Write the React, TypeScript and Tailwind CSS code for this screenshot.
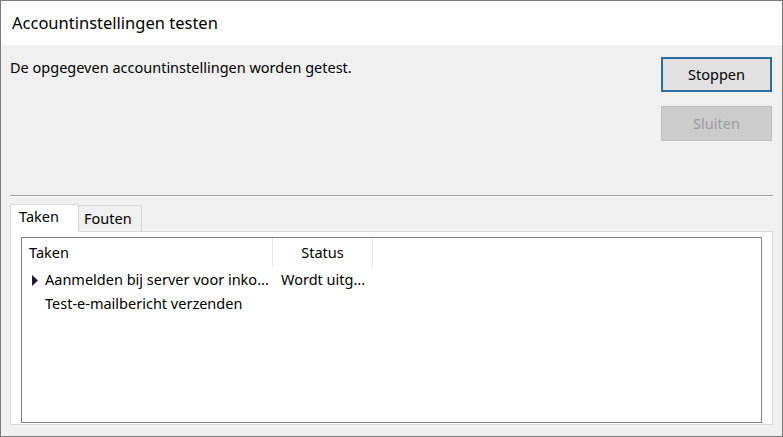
import React from "react";

const font = "font-['Segoe_UI','Noto_Sans',sans-serif]";

const tasks = [
  { name: "Aanmelden bij server voor inko...", status: "Wordt uitg...", active: true },
  { name: "Test-e-mailbericht verzenden", status: "", active: false },
];

const App: React.FC = () => {
  return (
    <div className={`w-[783px] h-[437px] border border-[#7a7a7a] flex flex-col bg-[#f0f0f0] text-black ${font}`}>
      {/* titel */}
      <div className="h-[44px] bg-white flex items-center pl-[11px] text-[16.5px] shrink-0">
        Accountinstellingen testen
      </div>

      <div className="flex-1 flex flex-col">
        <div className="flex justify-between pt-[11px] pl-[9px] pr-[10px] h-[150px]">
          <p className="text-[14.5px] leading-[22px]">De opgegeven accountinstellingen worden getest.</p>
          <div className="flex flex-col gap-[14px] pt-px">
            <button className="w-[111px] h-[35px] bg-[#e1e1e1] border-2 border-[#2b6ea6] text-[14.5px]">
              Stoppen
            </button>
            <button disabled className="w-[111px] h-[35px] bg-[#cccccc] border border-[#bfbfbf] text-[#9c9c9c] text-[14.5px]">
              Sluiten
            </button>
          </div>
        </div>

        <div className="mx-[9px] border-t border-[#a0a0a0] border-b border-b-white" />

        <div className="flex px-[9px] mt-[6px] items-end h-[28px]">
          <div className="w-[69px] h-[28px] bg-white border border-[#d9d9d9] border-b-0 pl-[8px] pt-[1px] text-[14.5px] relative z-10 -mb-px">
            Taken
          </div>
          <div className="w-[63px] h-[26px] bg-[#f0f0f0] border border-[#d9d9d9] border-l-0 border-b-0 pl-[5px] pt-[2px] text-[14.5px]">
            Fouten
          </div>
        </div>

        <div className="mx-[9px] h-[194px] bg-white border border-[#d9d9d9] pt-[5px] pl-[10px] pr-[10px]">
          <div className="h-[186px] border border-[#828282] text-[14.5px]">
            <div className="flex h-[28px]">
              <div className="w-[251px] border-r border-[#e5e5e5] pl-[7px] pt-px flex items-center">Taken</div>
              <div className="w-[100px] border-r border-[#e5e5e5] pt-px flex items-center justify-center">Status</div>
            </div>
            <div className="pt-[2px]">
              {tasks.map((t, i) => (
                <div key={i} className="flex h-[24px] items-center">
                  <div className="w-[251px] flex items-center">
                    <span className="w-[23px] flex justify-center pl-[3px]">
                      {t.active && (
                        <svg width="6" height="11" viewBox="0 0 6 11">
                          <path d="M0 0 L6 5.5 L0 11 Z" fill="#1b1b3a" />
                        </svg>
                      )}
                    </span>
                    <span className="whitespace-nowrap">{t.name}</span>
                  </div>
                  <div className="pl-[8px] whitespace-nowrap">{t.status}</div>
                </div>
              ))}
            </div>
          </div>
        </div>
      </div>
    </div>
  );
};

export default App;
